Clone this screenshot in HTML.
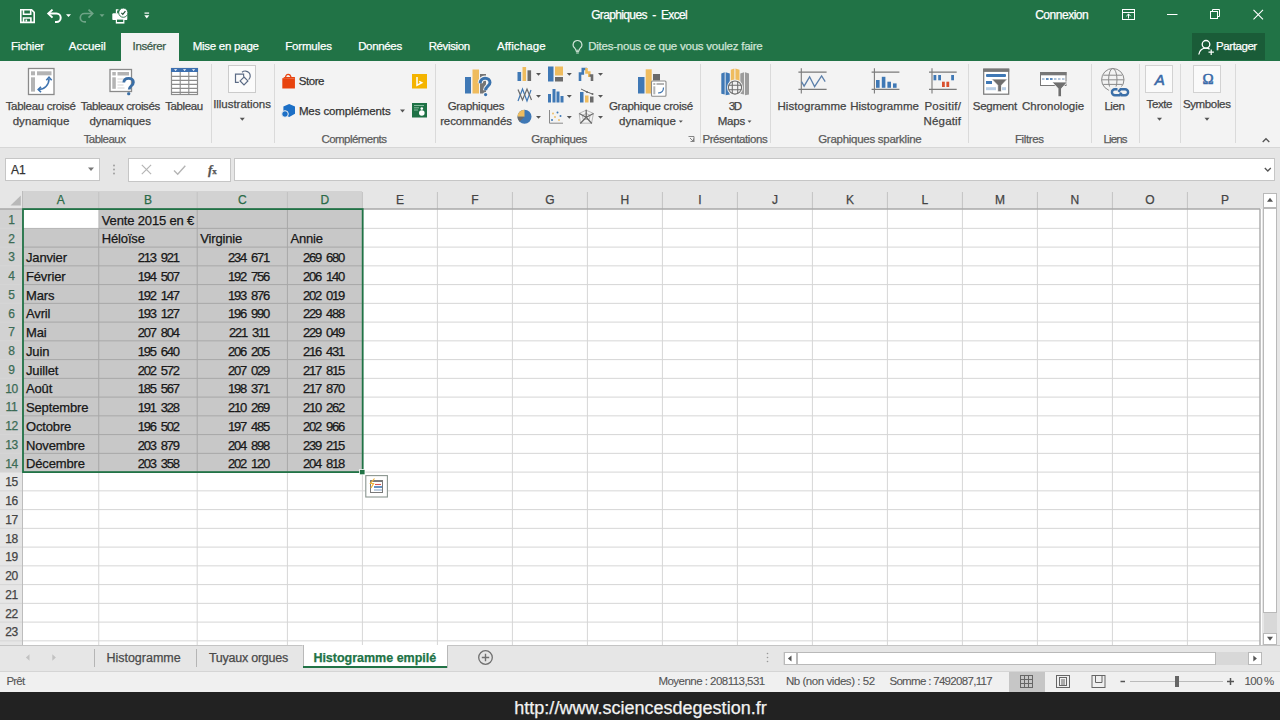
<!DOCTYPE html><html><head><meta charset="utf-8"><style>
html,body{margin:0;padding:0;width:1280px;height:720px;overflow:hidden;background:#fff}
body{position:relative;font-family:'Liberation Sans',sans-serif}
.b{position:absolute}
.t{position:absolute;white-space:nowrap;-webkit-text-stroke:0.25px currentColor}
svg{position:absolute;left:0;top:0}
</style></head><body><div class="b" style="left:0px;top:0px;width:1280px;height:61px;background:#217346"></div><div class="b" style="left:121px;top:33px;width:58px;height:28px;background:#f3f3f3"></div><div class="b" style="left:0px;top:61px;width:1280px;height:86px;background:#f3f3f3"></div><div class="b" style="left:0px;top:146.5px;width:1280px;height:1.5px;background:#d6d6d6"></div><div class="b" style="left:0px;top:148px;width:1280px;height:43px;background:#e6e6e6"></div><div class="t" style="left:591.15px;top:9.04px;font-size:12px;line-height:12px;color:#fff;font-weight:400;letter-spacing:-0.640px;">Graphiques &nbsp;-&nbsp; Excel</div><div class="t" style="left:1035.2px;top:9.14px;font-size:12px;line-height:12px;color:#fff;font-weight:400;letter-spacing:-0.484px;">Connexion</div><div class="t" style="left:10.9px;top:41.17px;font-size:11.5px;line-height:11.5px;color:#fff;font-weight:400;letter-spacing:-0.203px;">Fichier</div><div class="t" style="left:68.80000000000001px;top:41.17px;font-size:11.5px;line-height:11.5px;color:#fff;font-weight:400;letter-spacing:-0.013px;">Accueil</div><div class="t" style="left:132.6px;top:41.17px;font-size:11.5px;line-height:11.5px;color:#3a5a48;font-weight:400;letter-spacing:-0.366px;">Insérer</div><div class="t" style="left:192.65px;top:41.17px;font-size:11.5px;line-height:11.5px;color:#fff;font-weight:400;letter-spacing:-0.250px;">Mise en page</div><div class="t" style="left:285.15px;top:41.17px;font-size:11.5px;line-height:11.5px;color:#fff;font-weight:400;letter-spacing:-0.163px;">Formules</div><div class="t" style="left:358.15px;top:41.17px;font-size:11.5px;line-height:11.5px;color:#fff;font-weight:400;letter-spacing:-0.333px;">Données</div><div class="t" style="left:428.65px;top:41.17px;font-size:11.5px;line-height:11.5px;color:#fff;font-weight:400;letter-spacing:-0.366px;">Révision</div><div class="t" style="left:496.9px;top:41.17px;font-size:11.5px;line-height:11.5px;color:#fff;font-weight:400;letter-spacing:0.131px;">Affichage</div><div class="t" style="left:588.15px;top:40.97px;font-size:11.5px;line-height:11.5px;color:#cfe3d6;font-weight:400;letter-spacing:-0.225px;">Dites-nous ce que vous voulez faire</div><div class="b" style="left:1192px;top:33px;width:73px;height:27px;background:#1a5c38"></div><div class="t" style="left:1216.0px;top:40.97px;font-size:11.5px;line-height:11.5px;color:#fff;font-weight:400;letter-spacing:-0.416px;">Partager</div><div class="b" style="left:210.5px;top:64px;width:1px;height:79px;background:#dadada"></div><div class="b" style="left:274px;top:64px;width:1px;height:79px;background:#dadada"></div><div class="b" style="left:434.5px;top:64px;width:1px;height:79px;background:#dadada"></div><div class="b" style="left:699.5px;top:64px;width:1px;height:79px;background:#dadada"></div><div class="b" style="left:770px;top:64px;width:1px;height:79px;background:#dadada"></div><div class="b" style="left:967.5px;top:64px;width:1px;height:79px;background:#dadada"></div><div class="b" style="left:1091px;top:64px;width:1px;height:79px;background:#dadada"></div><div class="b" style="left:1138.5px;top:64px;width:1px;height:79px;background:#dadada"></div><div class="b" style="left:1180px;top:64px;width:1px;height:79px;background:#dadada"></div><div class="b" style="left:1234.5px;top:64px;width:1px;height:79px;background:#dadada"></div><div class="t" style="left:5.65px;top:100.87px;font-size:11.5px;line-height:11.5px;color:#444;font-weight:400;letter-spacing:-0.297px;">Tableau croisé</div><div class="t" style="left:12.65px;top:115.57px;font-size:11.5px;line-height:11.5px;color:#444;font-weight:400;letter-spacing:0.067px;">dynamique</div><div class="t" style="left:80.65px;top:100.87px;font-size:11.5px;line-height:11.5px;color:#444;font-weight:400;letter-spacing:-0.407px;">Tableaux croisés</div><div class="t" style="left:89.4px;top:115.57px;font-size:11.5px;line-height:11.5px;color:#444;font-weight:400;letter-spacing:-0.052px;">dynamiques</div><div class="t" style="left:165.15px;top:100.87px;font-size:11.5px;line-height:11.5px;color:#444;font-weight:400;letter-spacing:-0.374px;">Tableau</div><div class="t" style="left:83.65px;top:133.57px;font-size:11.5px;line-height:11.5px;color:#5c5c5c;font-weight:400;letter-spacing:-0.535px;">Tableaux</div><div class="b" style="left:228px;top:64.7px;width:27.6px;height:28px;background:#fbfbfb;border:1px solid #cbcbcb;box-sizing:border-box"></div><div class="t" style="left:213.15px;top:99.17px;font-size:11.5px;line-height:11.5px;color:#444;font-weight:400;letter-spacing:-0.031px;">Illustrations</div><div class="t" style="left:298.7px;top:76.07px;font-size:11.5px;line-height:11.5px;color:#333;font-weight:400;letter-spacing:-0.425px;">Store</div><div class="t" style="left:298.9px;top:105.77px;font-size:11.5px;line-height:11.5px;color:#333;font-weight:400;letter-spacing:-0.108px;">Mes compléments</div><div class="t" style="left:321.4px;top:133.57px;font-size:11.5px;line-height:11.5px;color:#5c5c5c;font-weight:400;letter-spacing:-0.540px;">Compléments</div><div class="t" style="left:447.65px;top:100.87px;font-size:11.5px;line-height:11.5px;color:#444;font-weight:400;letter-spacing:-0.297px;">Graphiques</div><div class="t" style="left:440.15px;top:115.57px;font-size:11.5px;line-height:11.5px;color:#444;font-weight:400;letter-spacing:-0.107px;">recommandés</div><div class="t" style="left:608.9px;top:100.87px;font-size:11.5px;line-height:11.5px;color:#444;font-weight:400;letter-spacing:-0.219px;">Graphique croisé</div><div class="t" style="left:618.9px;top:115.57px;font-size:11.5px;line-height:11.5px;color:#444;font-weight:400;letter-spacing:0.098px;">dynamique</div><div class="t" style="left:531.15px;top:133.57px;font-size:11.5px;line-height:11.5px;color:#5c5c5c;font-weight:400;letter-spacing:-0.380px;">Graphiques</div><div class="t" style="left:728.65px;top:100.87px;font-size:11.5px;line-height:11.5px;color:#444;font-weight:400;letter-spacing:-1.403px;">3D</div><div class="t" style="left:717.65px;top:115.57px;font-size:11.5px;line-height:11.5px;color:#444;font-weight:400;letter-spacing:-0.192px;">Maps</div><div class="t" style="left:702.4px;top:133.57px;font-size:11.5px;line-height:11.5px;color:#5c5c5c;font-weight:400;letter-spacing:-0.419px;">Présentations</div><div class="t" style="left:777.4px;top:100.87px;font-size:11.5px;line-height:11.5px;color:#444;font-weight:400;letter-spacing:0.066px;">Histogramme</div><div class="t" style="left:850.15px;top:100.87px;font-size:11.5px;line-height:11.5px;color:#444;font-weight:400;letter-spacing:0.041px;">Histogramme</div><div class="t" style="left:924.4px;top:100.87px;font-size:11.5px;line-height:11.5px;color:#444;font-weight:400;letter-spacing:0.298px;">Positif/</div><div class="t" style="left:923.6px;top:115.57px;font-size:11.5px;line-height:11.5px;color:#444;font-weight:400;letter-spacing:0.160px;">Négatif</div><div class="t" style="left:818.15px;top:133.57px;font-size:11.5px;line-height:11.5px;color:#5c5c5c;font-weight:400;letter-spacing:-0.270px;">Graphiques sparkline</div><div class="t" style="left:972.8px;top:100.87px;font-size:11.5px;line-height:11.5px;color:#444;font-weight:400;letter-spacing:-0.272px;">Segment</div><div class="t" style="left:1022.0px;top:100.87px;font-size:11.5px;line-height:11.5px;color:#444;font-weight:400;letter-spacing:0.018px;">Chronologie</div><div class="t" style="left:1015.0px;top:133.57px;font-size:11.5px;line-height:11.5px;color:#5c5c5c;font-weight:400;letter-spacing:-0.402px;">Filtres</div><div class="t" style="left:1104.4px;top:100.87px;font-size:11.5px;line-height:11.5px;color:#444;font-weight:400;letter-spacing:-0.417px;">Lien</div><div class="t" style="left:1103.6000000000001px;top:133.57px;font-size:11.5px;line-height:11.5px;color:#5c5c5c;font-weight:400;letter-spacing:-0.925px;">Liens</div><div class="b" style="left:1145.3px;top:65px;width:27.3px;height:27.5px;background:#fafafa;border:1px solid #d2d2d2;box-sizing:border-box"></div><div class="t" style="left:1009.7px;width:300px;text-align:center;top:71.60px;font-size:15px;line-height:15px;color:#3a6aa8;font-weight:400;font-style:italic;-webkit-text-stroke:0.6px #3a6aa8">A</div><div class="t" style="left:1146.6000000000001px;top:99.07px;font-size:11.5px;line-height:11.5px;color:#444;font-weight:400;letter-spacing:-0.425px;">Texte</div><div class="b" style="left:1193px;top:65px;width:27.7px;height:27.5px;background:#fafafa;border:1px solid #d2d2d2;box-sizing:border-box"></div><div class="t" style="left:1058px;width:300px;text-align:center;top:71.60px;font-size:15px;line-height:15px;color:#3a6aa8;font-weight:400;font-family:'Liberation Serif',serif;-webkit-text-stroke:0.5px #3a6aa8">Ω</div><div class="t" style="left:1182.9px;top:99.07px;font-size:11.5px;line-height:11.5px;color:#444;font-weight:400;letter-spacing:-0.357px;">Symboles</div><div class="b" style="left:5px;top:158px;width:95px;height:23px;background:#fff;border:1px solid #c6c6c6;box-sizing:border-box"></div><div class="t" style="left:11px;top:164.34px;font-size:12px;line-height:12px;color:#333;font-weight:400;">A1</div><div class="b" style="left:128px;top:157.5px;width:103px;height:24px;background:#fff;border:1px solid #c6c6c6;box-sizing:border-box"></div><div class="t" style="left:208px;top:162.50px;font-size:13px;line-height:13px;color:#555;font-weight:400;font-family:'Liberation Serif',serif;font-weight:700"><i>f</i><span style="font-size:9px">x</span></div><div class="b" style="left:234.4px;top:158px;width:1041px;height:23.4px;background:#fff;border:1px solid #c6c6c6;box-sizing:border-box"></div><div class="b" style="left:0px;top:191px;width:1262px;height:18px;background:#e6e6e6"></div><div class="b" style="left:23px;top:209px;width:1237px;height:436px;background:#fff"></div><div class="b" style="left:0px;top:209px;width:23px;height:436px;background:#e6e6e6"></div><div class="b" style="left:23px;top:191px;width:339.4px;height:18px;background:#d2d2d2"></div><div class="b" style="left:0px;top:209px;width:23px;height:263.1px;background:#d2d2d2"></div><div class="t" style="left:-89.125px;width:300px;text-align:center;top:194.14px;font-size:12px;line-height:12px;color:#2a6a47;font-weight:400;">A</div><div class="t" style="left:-2.0250000000000057px;width:300px;text-align:center;top:194.14px;font-size:12px;line-height:12px;color:#2a6a47;font-weight:400;">B</div><div class="t" style="left:92.29999999999998px;width:300px;text-align:center;top:194.14px;font-size:12px;line-height:12px;color:#2a6a47;font-weight:400;">C</div><div class="t" style="left:174.89999999999998px;width:300px;text-align:center;top:194.14px;font-size:12px;line-height:12px;color:#2a6a47;font-weight:400;">D</div><div class="t" style="left:249.89999999999998px;width:300px;text-align:center;top:194.14px;font-size:12px;line-height:12px;color:#444;font-weight:400;">E</div><div class="t" style="left:324.9px;width:300px;text-align:center;top:194.14px;font-size:12px;line-height:12px;color:#444;font-weight:400;">F</div><div class="t" style="left:399.9px;width:300px;text-align:center;top:194.14px;font-size:12px;line-height:12px;color:#444;font-weight:400;">G</div><div class="t" style="left:474.9px;width:300px;text-align:center;top:194.14px;font-size:12px;line-height:12px;color:#444;font-weight:400;">H</div><div class="t" style="left:549.9px;width:300px;text-align:center;top:194.14px;font-size:12px;line-height:12px;color:#444;font-weight:400;">I</div><div class="t" style="left:624.9px;width:300px;text-align:center;top:194.14px;font-size:12px;line-height:12px;color:#444;font-weight:400;">J</div><div class="t" style="left:699.9px;width:300px;text-align:center;top:194.14px;font-size:12px;line-height:12px;color:#444;font-weight:400;">K</div><div class="t" style="left:774.9px;width:300px;text-align:center;top:194.14px;font-size:12px;line-height:12px;color:#444;font-weight:400;">L</div><div class="t" style="left:849.9000000000001px;width:300px;text-align:center;top:194.14px;font-size:12px;line-height:12px;color:#444;font-weight:400;">M</div><div class="t" style="left:924.9000000000001px;width:300px;text-align:center;top:194.14px;font-size:12px;line-height:12px;color:#444;font-weight:400;">N</div><div class="t" style="left:999.9000000000001px;width:300px;text-align:center;top:194.14px;font-size:12px;line-height:12px;color:#444;font-weight:400;">O</div><div class="t" style="left:1074.9px;width:300px;text-align:center;top:194.14px;font-size:12px;line-height:12px;color:#444;font-weight:400;">P</div><div class="t" style="left:-138.5px;width:300px;text-align:center;top:213.94px;font-size:12px;line-height:12px;color:#3b6b55;font-weight:400;letter-spacing:-0.3px">1</div><div class="t" style="left:-138.5px;width:300px;text-align:center;top:232.69px;font-size:12px;line-height:12px;color:#3b6b55;font-weight:400;letter-spacing:-0.3px">2</div><div class="t" style="left:-138.5px;width:300px;text-align:center;top:251.44px;font-size:12px;line-height:12px;color:#3b6b55;font-weight:400;letter-spacing:-0.3px">3</div><div class="t" style="left:-138.5px;width:300px;text-align:center;top:270.19px;font-size:12px;line-height:12px;color:#3b6b55;font-weight:400;letter-spacing:-0.3px">4</div><div class="t" style="left:-138.5px;width:300px;text-align:center;top:288.94px;font-size:12px;line-height:12px;color:#3b6b55;font-weight:400;letter-spacing:-0.3px">5</div><div class="t" style="left:-138.5px;width:300px;text-align:center;top:307.69px;font-size:12px;line-height:12px;color:#3b6b55;font-weight:400;letter-spacing:-0.3px">6</div><div class="t" style="left:-138.5px;width:300px;text-align:center;top:326.44px;font-size:12px;line-height:12px;color:#3b6b55;font-weight:400;letter-spacing:-0.3px">7</div><div class="t" style="left:-138.5px;width:300px;text-align:center;top:345.19px;font-size:12px;line-height:12px;color:#3b6b55;font-weight:400;letter-spacing:-0.3px">8</div><div class="t" style="left:-138.5px;width:300px;text-align:center;top:363.94px;font-size:12px;line-height:12px;color:#3b6b55;font-weight:400;letter-spacing:-0.3px">9</div><div class="t" style="left:-138.5px;width:300px;text-align:center;top:382.69px;font-size:12px;line-height:12px;color:#3b6b55;font-weight:400;letter-spacing:-0.3px">10</div><div class="t" style="left:-138.5px;width:300px;text-align:center;top:401.44px;font-size:12px;line-height:12px;color:#3b6b55;font-weight:400;letter-spacing:-0.3px">11</div><div class="t" style="left:-138.5px;width:300px;text-align:center;top:420.19px;font-size:12px;line-height:12px;color:#3b6b55;font-weight:400;letter-spacing:-0.3px">12</div><div class="t" style="left:-138.5px;width:300px;text-align:center;top:438.94px;font-size:12px;line-height:12px;color:#3b6b55;font-weight:400;letter-spacing:-0.3px">13</div><div class="t" style="left:-138.5px;width:300px;text-align:center;top:457.69px;font-size:12px;line-height:12px;color:#3b6b55;font-weight:400;letter-spacing:-0.3px">14</div><div class="t" style="left:-138.5px;width:300px;text-align:center;top:476.44px;font-size:12px;line-height:12px;color:#444;font-weight:400;letter-spacing:-0.3px">15</div><div class="t" style="left:-138.5px;width:300px;text-align:center;top:495.19px;font-size:12px;line-height:12px;color:#444;font-weight:400;letter-spacing:-0.3px">16</div><div class="t" style="left:-138.5px;width:300px;text-align:center;top:513.94px;font-size:12px;line-height:12px;color:#444;font-weight:400;letter-spacing:-0.3px">17</div><div class="t" style="left:-138.5px;width:300px;text-align:center;top:532.69px;font-size:12px;line-height:12px;color:#444;font-weight:400;letter-spacing:-0.3px">18</div><div class="t" style="left:-138.5px;width:300px;text-align:center;top:551.44px;font-size:12px;line-height:12px;color:#444;font-weight:400;letter-spacing:-0.3px">19</div><div class="t" style="left:-138.5px;width:300px;text-align:center;top:570.19px;font-size:12px;line-height:12px;color:#444;font-weight:400;letter-spacing:-0.3px">20</div><div class="t" style="left:-138.5px;width:300px;text-align:center;top:588.94px;font-size:12px;line-height:12px;color:#444;font-weight:400;letter-spacing:-0.3px">21</div><div class="t" style="left:-138.5px;width:300px;text-align:center;top:607.69px;font-size:12px;line-height:12px;color:#444;font-weight:400;letter-spacing:-0.3px">22</div><div class="t" style="left:-138.5px;width:300px;text-align:center;top:626.44px;font-size:12px;line-height:12px;color:#444;font-weight:400;letter-spacing:-0.3px">23</div><div class="t" style="left:101.75px;top:213.50px;font-size:13px;line-height:13px;color:#222;font-weight:400;letter-spacing:-0.15px">Vente 2015 en €</div><div class="t" style="left:101.75px;top:232.25px;font-size:13px;line-height:13px;color:#222;font-weight:400;letter-spacing:-0.15px">Héloïse</div><div class="t" style="left:200.2px;top:232.25px;font-size:13px;line-height:13px;color:#222;font-weight:400;letter-spacing:-0.15px">Virginie</div><div class="t" style="left:290.4px;top:232.25px;font-size:13px;line-height:13px;color:#222;font-weight:400;letter-spacing:-0.15px">Annie</div><div class="t" style="left:26px;top:251.00px;font-size:13px;line-height:13px;color:#222;font-weight:400;letter-spacing:-0.15px">Janvier</div><div class="t" style="left:-121.10000000000002px;width:300px;text-align:right;top:251.00px;font-size:13px;line-height:13px;color:#222;font-weight:400;letter-spacing:-1.2px;word-spacing:2.5px">213 921</div><div class="t" style="left:-30.900000000000034px;width:300px;text-align:right;top:251.00px;font-size:13px;line-height:13px;color:#222;font-weight:400;letter-spacing:-1.2px;word-spacing:2.5px">234 671</div><div class="t" style="left:44.099999999999966px;width:300px;text-align:right;top:251.00px;font-size:13px;line-height:13px;color:#222;font-weight:400;letter-spacing:-1.2px;word-spacing:2.5px">269 680</div><div class="t" style="left:26px;top:269.75px;font-size:13px;line-height:13px;color:#222;font-weight:400;letter-spacing:-0.15px">Février</div><div class="t" style="left:-121.10000000000002px;width:300px;text-align:right;top:269.75px;font-size:13px;line-height:13px;color:#222;font-weight:400;letter-spacing:-1.2px;word-spacing:2.5px">194 507</div><div class="t" style="left:-30.900000000000034px;width:300px;text-align:right;top:269.75px;font-size:13px;line-height:13px;color:#222;font-weight:400;letter-spacing:-1.2px;word-spacing:2.5px">192 756</div><div class="t" style="left:44.099999999999966px;width:300px;text-align:right;top:269.75px;font-size:13px;line-height:13px;color:#222;font-weight:400;letter-spacing:-1.2px;word-spacing:2.5px">206 140</div><div class="t" style="left:26px;top:288.50px;font-size:13px;line-height:13px;color:#222;font-weight:400;letter-spacing:-0.15px">Mars</div><div class="t" style="left:-121.10000000000002px;width:300px;text-align:right;top:288.50px;font-size:13px;line-height:13px;color:#222;font-weight:400;letter-spacing:-1.2px;word-spacing:2.5px">192 147</div><div class="t" style="left:-30.900000000000034px;width:300px;text-align:right;top:288.50px;font-size:13px;line-height:13px;color:#222;font-weight:400;letter-spacing:-1.2px;word-spacing:2.5px">193 876</div><div class="t" style="left:44.099999999999966px;width:300px;text-align:right;top:288.50px;font-size:13px;line-height:13px;color:#222;font-weight:400;letter-spacing:-1.2px;word-spacing:2.5px">202 019</div><div class="t" style="left:26px;top:307.25px;font-size:13px;line-height:13px;color:#222;font-weight:400;letter-spacing:-0.15px">Avril</div><div class="t" style="left:-121.10000000000002px;width:300px;text-align:right;top:307.25px;font-size:13px;line-height:13px;color:#222;font-weight:400;letter-spacing:-1.2px;word-spacing:2.5px">193 127</div><div class="t" style="left:-30.900000000000034px;width:300px;text-align:right;top:307.25px;font-size:13px;line-height:13px;color:#222;font-weight:400;letter-spacing:-1.2px;word-spacing:2.5px">196 990</div><div class="t" style="left:44.099999999999966px;width:300px;text-align:right;top:307.25px;font-size:13px;line-height:13px;color:#222;font-weight:400;letter-spacing:-1.2px;word-spacing:2.5px">229 488</div><div class="t" style="left:26px;top:326.00px;font-size:13px;line-height:13px;color:#222;font-weight:400;letter-spacing:-0.15px">Mai</div><div class="t" style="left:-121.10000000000002px;width:300px;text-align:right;top:326.00px;font-size:13px;line-height:13px;color:#222;font-weight:400;letter-spacing:-1.2px;word-spacing:2.5px">207 804</div><div class="t" style="left:-30.900000000000034px;width:300px;text-align:right;top:326.00px;font-size:13px;line-height:13px;color:#222;font-weight:400;letter-spacing:-1.2px;word-spacing:2.5px">221 311</div><div class="t" style="left:44.099999999999966px;width:300px;text-align:right;top:326.00px;font-size:13px;line-height:13px;color:#222;font-weight:400;letter-spacing:-1.2px;word-spacing:2.5px">229 049</div><div class="t" style="left:26px;top:344.75px;font-size:13px;line-height:13px;color:#222;font-weight:400;letter-spacing:-0.15px">Juin</div><div class="t" style="left:-121.10000000000002px;width:300px;text-align:right;top:344.75px;font-size:13px;line-height:13px;color:#222;font-weight:400;letter-spacing:-1.2px;word-spacing:2.5px">195 640</div><div class="t" style="left:-30.900000000000034px;width:300px;text-align:right;top:344.75px;font-size:13px;line-height:13px;color:#222;font-weight:400;letter-spacing:-1.2px;word-spacing:2.5px">206 205</div><div class="t" style="left:44.099999999999966px;width:300px;text-align:right;top:344.75px;font-size:13px;line-height:13px;color:#222;font-weight:400;letter-spacing:-1.2px;word-spacing:2.5px">216 431</div><div class="t" style="left:26px;top:363.50px;font-size:13px;line-height:13px;color:#222;font-weight:400;letter-spacing:-0.15px">Juillet</div><div class="t" style="left:-121.10000000000002px;width:300px;text-align:right;top:363.50px;font-size:13px;line-height:13px;color:#222;font-weight:400;letter-spacing:-1.2px;word-spacing:2.5px">202 572</div><div class="t" style="left:-30.900000000000034px;width:300px;text-align:right;top:363.50px;font-size:13px;line-height:13px;color:#222;font-weight:400;letter-spacing:-1.2px;word-spacing:2.5px">207 029</div><div class="t" style="left:44.099999999999966px;width:300px;text-align:right;top:363.50px;font-size:13px;line-height:13px;color:#222;font-weight:400;letter-spacing:-1.2px;word-spacing:2.5px">217 815</div><div class="t" style="left:26px;top:382.25px;font-size:13px;line-height:13px;color:#222;font-weight:400;letter-spacing:-0.15px">Août</div><div class="t" style="left:-121.10000000000002px;width:300px;text-align:right;top:382.25px;font-size:13px;line-height:13px;color:#222;font-weight:400;letter-spacing:-1.2px;word-spacing:2.5px">185 567</div><div class="t" style="left:-30.900000000000034px;width:300px;text-align:right;top:382.25px;font-size:13px;line-height:13px;color:#222;font-weight:400;letter-spacing:-1.2px;word-spacing:2.5px">198 371</div><div class="t" style="left:44.099999999999966px;width:300px;text-align:right;top:382.25px;font-size:13px;line-height:13px;color:#222;font-weight:400;letter-spacing:-1.2px;word-spacing:2.5px">217 870</div><div class="t" style="left:26px;top:401.00px;font-size:13px;line-height:13px;color:#222;font-weight:400;letter-spacing:-0.15px">Septembre</div><div class="t" style="left:-121.10000000000002px;width:300px;text-align:right;top:401.00px;font-size:13px;line-height:13px;color:#222;font-weight:400;letter-spacing:-1.2px;word-spacing:2.5px">191 328</div><div class="t" style="left:-30.900000000000034px;width:300px;text-align:right;top:401.00px;font-size:13px;line-height:13px;color:#222;font-weight:400;letter-spacing:-1.2px;word-spacing:2.5px">210 269</div><div class="t" style="left:44.099999999999966px;width:300px;text-align:right;top:401.00px;font-size:13px;line-height:13px;color:#222;font-weight:400;letter-spacing:-1.2px;word-spacing:2.5px">210 262</div><div class="t" style="left:26px;top:419.75px;font-size:13px;line-height:13px;color:#222;font-weight:400;letter-spacing:-0.15px">Octobre</div><div class="t" style="left:-121.10000000000002px;width:300px;text-align:right;top:419.75px;font-size:13px;line-height:13px;color:#222;font-weight:400;letter-spacing:-1.2px;word-spacing:2.5px">196 502</div><div class="t" style="left:-30.900000000000034px;width:300px;text-align:right;top:419.75px;font-size:13px;line-height:13px;color:#222;font-weight:400;letter-spacing:-1.2px;word-spacing:2.5px">197 485</div><div class="t" style="left:44.099999999999966px;width:300px;text-align:right;top:419.75px;font-size:13px;line-height:13px;color:#222;font-weight:400;letter-spacing:-1.2px;word-spacing:2.5px">202 966</div><div class="t" style="left:26px;top:438.50px;font-size:13px;line-height:13px;color:#222;font-weight:400;letter-spacing:-0.15px">Novembre</div><div class="t" style="left:-121.10000000000002px;width:300px;text-align:right;top:438.50px;font-size:13px;line-height:13px;color:#222;font-weight:400;letter-spacing:-1.2px;word-spacing:2.5px">203 879</div><div class="t" style="left:-30.900000000000034px;width:300px;text-align:right;top:438.50px;font-size:13px;line-height:13px;color:#222;font-weight:400;letter-spacing:-1.2px;word-spacing:2.5px">204 898</div><div class="t" style="left:44.099999999999966px;width:300px;text-align:right;top:438.50px;font-size:13px;line-height:13px;color:#222;font-weight:400;letter-spacing:-1.2px;word-spacing:2.5px">239 215</div><div class="t" style="left:26px;top:457.25px;font-size:13px;line-height:13px;color:#222;font-weight:400;letter-spacing:-0.15px">Décembre</div><div class="t" style="left:-121.10000000000002px;width:300px;text-align:right;top:457.25px;font-size:13px;line-height:13px;color:#222;font-weight:400;letter-spacing:-1.2px;word-spacing:2.5px">203 358</div><div class="t" style="left:-30.900000000000034px;width:300px;text-align:right;top:457.25px;font-size:13px;line-height:13px;color:#222;font-weight:400;letter-spacing:-1.2px;word-spacing:2.5px">202 120</div><div class="t" style="left:44.099999999999966px;width:300px;text-align:right;top:457.25px;font-size:13px;line-height:13px;color:#222;font-weight:400;letter-spacing:-1.2px;word-spacing:2.5px">204 818</div><div class="b" style="left:1262px;top:191px;width:18px;height:454px;background:#e6e6e6"></div><div class="b" style="left:1263.2px;top:193.2px;width:13.5px;height:14.4px;background:#fff;border:1px solid #b9b9b9;box-sizing:border-box"></div><div class="b" style="left:1263.2px;top:207.6px;width:13.5px;height:405px;background:#fff;border:1px solid #b9b9b9;box-sizing:border-box"></div><div class="b" style="left:1263.5px;top:612.5px;width:13px;height:20px;background:#d8d8d8"></div><div class="b" style="left:1263.2px;top:632.5px;width:13.5px;height:12.8px;background:#fff;border:1px solid #b9b9b9;box-sizing:border-box"></div><div class="b" style="left:0px;top:645px;width:1280px;height:26px;background:#e6e6e6"></div><div class="b" style="left:94px;top:649px;width:1px;height:18px;background:#b5b5b5"></div><div class="t" style="left:106.4px;top:651.72px;font-size:12.5px;line-height:12.5px;color:#4a4a4a;font-weight:400;letter-spacing:-0.003px;">Histogramme</div><div class="b" style="left:195.5px;top:649px;width:1px;height:18px;background:#b5b5b5"></div><div class="t" style="left:208.9px;top:651.72px;font-size:12.5px;line-height:12.5px;color:#4a4a4a;font-weight:400;letter-spacing:-0.245px;">Tuyaux orgues</div><div class="b" style="left:303px;top:641px;width:144px;height:25.5px;background:#fff"></div><div class="b" style="left:302.5px;top:645px;width:1px;height:23px;background:#b9b9b9"></div><div class="b" style="left:446.5px;top:645px;width:1px;height:23px;background:#b9b9b9"></div><div class="b" style="left:303px;top:666.3px;width:144px;height:1.8px;background:#217346"></div><div class="t" style="left:313.4px;top:651.72px;font-size:12.5px;line-height:12.5px;color:#217346;font-weight:700;letter-spacing:-0.010px;">Histogramme empilé</div><div class="b" style="left:783px;top:651.6px;width:478px;height:13.8px;background:#d8d8d8"></div><div class="b" style="left:783.5px;top:651.6px;width:13.5px;height:13.8px;background:#fff;border:1px solid #b9b9b9;box-sizing:border-box"></div><div class="b" style="left:797px;top:651.6px;width:418.6px;height:13.8px;background:#fff;border:1px solid #b9b9b9;box-sizing:border-box"></div><div class="b" style="left:1248.4px;top:651.6px;width:13.2px;height:13.8px;background:#fff;border:1px solid #b9b9b9;box-sizing:border-box"></div><div class="b" style="left:0px;top:671px;width:1280px;height:21px;background:#f0f0f0"></div><div class="b" style="left:0px;top:671px;width:1280px;height:1px;background:#d5d5d5"></div><div class="t" style="left:6.4px;top:675.87px;font-size:11.5px;line-height:11.5px;color:#555;font-weight:400;letter-spacing:-0.765px;-webkit-text-stroke:0.1px #555">Prêt</div><div class="t" style="left:658.4px;top:676.17px;font-size:11.5px;line-height:11.5px;color:#555;font-weight:400;letter-spacing:-0.526px;-webkit-text-stroke:0.1px #555">Moyenne : 208113,531</div><div class="t" style="left:785.9px;top:676.17px;font-size:11.5px;line-height:11.5px;color:#555;font-weight:400;letter-spacing:-0.437px;-webkit-text-stroke:0.1px #555">Nb (non vides) : 52</div><div class="t" style="left:889.4px;top:676.17px;font-size:11.5px;line-height:11.5px;color:#555;font-weight:400;letter-spacing:-0.679px;-webkit-text-stroke:0.1px #555">Somme : 7492087,117</div><div class="b" style="left:1009px;top:672px;width:36px;height:20px;background:#c6c6c6"></div><div class="t" style="left:1244.4px;top:676.17px;font-size:11.5px;line-height:11.5px;color:#555;font-weight:400;letter-spacing:-0.444px;-webkit-text-stroke:0.1px #555">100</div><div class="t" style="left:1264.1000000000001px;top:676.17px;font-size:11.5px;line-height:11.5px;color:#555;font-weight:400;letter-spacing:-1.734px;-webkit-text-stroke:0.1px #555">%</div><div class="b" style="left:0px;top:692px;width:1280px;height:28px;background:#222"></div><div class="t" style="left:514.3px;top:698.56px;font-size:18px;line-height:18px;color:#f2f2f2;font-weight:400;letter-spacing:0.009px;">http://www.sciencesdegestion.fr</div><svg width="1280" height="720" viewBox="0 0 1280 720"><line x1="98.75" y1="209" x2="98.75" y2="645" stroke="#d6d6d6" stroke-width="1"/><line x1="98.75" y1="192" x2="98.75" y2="209" stroke="#c2c2c2" stroke-width="1"/><line x1="197.2" y1="209" x2="197.2" y2="645" stroke="#d6d6d6" stroke-width="1"/><line x1="197.2" y1="192" x2="197.2" y2="209" stroke="#c2c2c2" stroke-width="1"/><line x1="287.4" y1="209" x2="287.4" y2="645" stroke="#d6d6d6" stroke-width="1"/><line x1="287.4" y1="192" x2="287.4" y2="209" stroke="#c2c2c2" stroke-width="1"/><line x1="362.4" y1="209" x2="362.4" y2="645" stroke="#d6d6d6" stroke-width="1"/><line x1="362.4" y1="192" x2="362.4" y2="209" stroke="#c2c2c2" stroke-width="1"/><line x1="437.4" y1="209" x2="437.4" y2="645" stroke="#d6d6d6" stroke-width="1"/><line x1="437.4" y1="192" x2="437.4" y2="209" stroke="#c2c2c2" stroke-width="1"/><line x1="512.4" y1="209" x2="512.4" y2="645" stroke="#d6d6d6" stroke-width="1"/><line x1="512.4" y1="192" x2="512.4" y2="209" stroke="#c2c2c2" stroke-width="1"/><line x1="587.4" y1="209" x2="587.4" y2="645" stroke="#d6d6d6" stroke-width="1"/><line x1="587.4" y1="192" x2="587.4" y2="209" stroke="#c2c2c2" stroke-width="1"/><line x1="662.4" y1="209" x2="662.4" y2="645" stroke="#d6d6d6" stroke-width="1"/><line x1="662.4" y1="192" x2="662.4" y2="209" stroke="#c2c2c2" stroke-width="1"/><line x1="737.4" y1="209" x2="737.4" y2="645" stroke="#d6d6d6" stroke-width="1"/><line x1="737.4" y1="192" x2="737.4" y2="209" stroke="#c2c2c2" stroke-width="1"/><line x1="812.4" y1="209" x2="812.4" y2="645" stroke="#d6d6d6" stroke-width="1"/><line x1="812.4" y1="192" x2="812.4" y2="209" stroke="#c2c2c2" stroke-width="1"/><line x1="887.4" y1="209" x2="887.4" y2="645" stroke="#d6d6d6" stroke-width="1"/><line x1="887.4" y1="192" x2="887.4" y2="209" stroke="#c2c2c2" stroke-width="1"/><line x1="962.4" y1="209" x2="962.4" y2="645" stroke="#d6d6d6" stroke-width="1"/><line x1="962.4" y1="192" x2="962.4" y2="209" stroke="#c2c2c2" stroke-width="1"/><line x1="1037.4" y1="209" x2="1037.4" y2="645" stroke="#d6d6d6" stroke-width="1"/><line x1="1037.4" y1="192" x2="1037.4" y2="209" stroke="#c2c2c2" stroke-width="1"/><line x1="1112.4" y1="209" x2="1112.4" y2="645" stroke="#d6d6d6" stroke-width="1"/><line x1="1112.4" y1="192" x2="1112.4" y2="209" stroke="#c2c2c2" stroke-width="1"/><line x1="1187.4" y1="209" x2="1187.4" y2="645" stroke="#d6d6d6" stroke-width="1"/><line x1="1187.4" y1="192" x2="1187.4" y2="209" stroke="#c2c2c2" stroke-width="1"/><line x1="0" y1="228.35" x2="1260" y2="228.35" stroke="#d6d6d6" stroke-width="1"/><line x1="0" y1="247.1" x2="1260" y2="247.1" stroke="#d6d6d6" stroke-width="1"/><line x1="0" y1="265.85" x2="1260" y2="265.85" stroke="#d6d6d6" stroke-width="1"/><line x1="0" y1="284.6" x2="1260" y2="284.6" stroke="#d6d6d6" stroke-width="1"/><line x1="0" y1="303.35" x2="1260" y2="303.35" stroke="#d6d6d6" stroke-width="1"/><line x1="0" y1="322.1" x2="1260" y2="322.1" stroke="#d6d6d6" stroke-width="1"/><line x1="0" y1="340.85" x2="1260" y2="340.85" stroke="#d6d6d6" stroke-width="1"/><line x1="0" y1="359.6" x2="1260" y2="359.6" stroke="#d6d6d6" stroke-width="1"/><line x1="0" y1="378.35" x2="1260" y2="378.35" stroke="#d6d6d6" stroke-width="1"/><line x1="0" y1="397.1" x2="1260" y2="397.1" stroke="#d6d6d6" stroke-width="1"/><line x1="0" y1="415.85" x2="1260" y2="415.85" stroke="#d6d6d6" stroke-width="1"/><line x1="0" y1="434.6" x2="1260" y2="434.6" stroke="#d6d6d6" stroke-width="1"/><line x1="0" y1="453.35" x2="1260" y2="453.35" stroke="#d6d6d6" stroke-width="1"/><line x1="0" y1="472.1" x2="1260" y2="472.1" stroke="#d6d6d6" stroke-width="1"/><line x1="0" y1="490.85" x2="1260" y2="490.85" stroke="#d6d6d6" stroke-width="1"/><line x1="0" y1="509.6" x2="1260" y2="509.6" stroke="#d6d6d6" stroke-width="1"/><line x1="0" y1="528.35" x2="1260" y2="528.35" stroke="#d6d6d6" stroke-width="1"/><line x1="0" y1="547.1" x2="1260" y2="547.1" stroke="#d6d6d6" stroke-width="1"/><line x1="0" y1="565.85" x2="1260" y2="565.85" stroke="#d6d6d6" stroke-width="1"/><line x1="0" y1="584.6" x2="1260" y2="584.6" stroke="#d6d6d6" stroke-width="1"/><line x1="0" y1="603.35" x2="1260" y2="603.35" stroke="#d6d6d6" stroke-width="1"/><line x1="0" y1="622.1" x2="1260" y2="622.1" stroke="#d6d6d6" stroke-width="1"/><line x1="0" y1="640.85" x2="1260" y2="640.85" stroke="#d6d6d6" stroke-width="1"/><path d="M23 209.6H362.7V472.1H23z M23 209.6V228.35H98.75V209.6z" fill="#000" fill-opacity="0.215" fill-rule="evenodd"/><line x1="0" y1="209" x2="1260" y2="209" stroke="#a9a9a9" stroke-width="1.3"/><line x1="22.5" y1="191" x2="22.5" y2="645" stroke="#bdbdbd" stroke-width="1"/><line x1="1260" y1="209" x2="1260" y2="645" stroke="#a9a9a9" stroke-width="1.4"/><path d="M0 645.5H302.5M447 645.5H1280" stroke="#c4c4c4" stroke-width="1"/><path d="M20.8 195.6V205.6H10.5z" fill="#b8b8b8"/><rect x="23" y="209.1" width="339.7" height="263.0" fill="none" stroke="#217346" stroke-width="1.8"/><rect x="359.6" y="469.40000000000003" width="5.4" height="5.4" fill="#217346" stroke="#fff" stroke-width="0.8"/><rect x="365.8" y="475.6" width="21.6" height="21.4" fill="#fff" stroke="#8a9690" stroke-width="1.1"/><rect x="370.5" y="480.5" width="12" height="12" fill="#fff" stroke="#7a7a7a" stroke-width="1"/><rect x="370" y="480" width="13" height="2" fill="#7a7a7a"/><path d="M375 484.5h6" stroke="#d9534f" stroke-width="1.1"/><path d="M374 487h8" stroke="#3f78b5" stroke-width="1.6"/><path d="M374 490h8" stroke="#8fa9c8" stroke-width="1.1"/><path d="M374.5 478.5l-4 5h3l-2.5 4.5" fill="none" stroke="#f0b43c" stroke-width="1.2"/><g fill="none" stroke="#fff" stroke-width="1.6"><path d="M20.8 9.8h10.8l2.6 2.6v10h-13.4z"/><path d="M23.5 10v4.2h7.2V10"/><path d="M23.5 22.4v-4.4h7.4v4.4"/></g><rect x="25.5" y="19.5" width="1.6" height="2.2" fill="#fff"/><path d="M49 13.5h7.5a4.2 4.2 0 0 1 0 8.4H55" fill="none" stroke="#fff" stroke-width="2"/><path d="M52.5 9.6L48.3 13.6L52.5 17.6" fill="none" stroke="#fff" stroke-width="2"/><path d="M66 14.2h5l-2.5 2.8z" fill="#fff"/><g opacity="0.35"><path d="M92 13.5h-7.5a4.2 4.2 0 0 0 0 8.4H86" fill="none" stroke="#fff" stroke-width="1.7"/><path d="M88.5 9.6L92.7 13.6L88.5 17.6" fill="none" stroke="#fff" stroke-width="1.7"/><path d="M99.5 14.2h5l-2.5 2.8z" fill="#fff"/></g><rect x="112.3" y="13.3" width="15" height="6.8" rx="1.2" fill="#fff"/><path d="M118.5 9.8h-2v3.8" fill="none" stroke="#fff" stroke-width="1.3"/><rect x="115.8" y="18.6" width="8.6" height="5" fill="#fff"/><rect x="117" y="19.6" width="6.2" height="2.4" fill="#217346"/><circle cx="123.3" cy="12.7" r="4.6" fill="#fff" stroke="#217346" stroke-width="0.9"/><path d="M121.4 12.8l1.4 1.5l2.6-3.1" fill="none" stroke="#1d4f33" stroke-width="1.2"/><rect x="144.5" y="12.5" width="4.6" height="1.2" fill="#fff"/><path d="M144.3 15.2h5l-2.5 3.2z" fill="#fff"/><rect x="1122.5" y="9.5" width="12" height="10" fill="none" stroke="#fff" stroke-width="1"/><path d="M1122.5 12.5h12" stroke="#fff" stroke-width="1"/><path d="M1128.5 18.5v-4.5M1126.3 16.2l2.2-2.2l2.2 2.2" fill="none" stroke="#fff" stroke-width="1"/><path d="M1167 14.5h10.5" stroke="#fff" stroke-width="1"/><rect x="1210.5" y="11.5" width="7" height="7" fill="none" stroke="#fff" stroke-width="1"/><path d="M1212.5 11.5v-2h7v7h-2" fill="none" stroke="#fff" stroke-width="1"/><path d="M1253.5 9.8l9.5 9.5M1263 9.8l-9.5 9.5" stroke="#fff" stroke-width="1.1"/><path d="M577.5 40.5a4.3 4.3 0 0 0-2.6 7.8c0.6 0.5 0.9 1.2 0.9 1.9h3.4c0-0.7 0.3-1.4 0.9-1.9a4.3 4.3 0 0 0-2.6-7.8z" fill="none" stroke="#d3e6da" stroke-width="1.1"/><path d="M575.8 51.6h3.4M576.2 53h2.6" stroke="#d3e6da" stroke-width="1"/><circle cx="1206" cy="44.3" r="3.8" fill="none" stroke="#fff" stroke-width="1.3"/><path d="M1198.8 54.5c0.8-4.2 3.6-6.3 7.2-6.3c1.4 0 2.6 0.3 3.6 0.9" fill="none" stroke="#fff" stroke-width="1.3"/><path d="M1208.5 52.2h5.4M1211.2 49.5v5.4" stroke="#fff" stroke-width="1.2"/><rect x="28.5" y="68.5" width="25.5" height="26" fill="#fff" stroke="#8a8a8a" stroke-width="1.3"/><rect x="31" y="71.3" width="4" height="4" fill="#b4b4b4"/><rect x="37" y="71.3" width="14.5" height="4" fill="#b4b4b4"/><rect x="31" y="77.3" width="4" height="14.3" fill="#b4b4b4"/><path d="M38.5 89.5c6 0 10.5-4.5 10.5-10.5" fill="none" stroke="#3f74b0" stroke-width="1.6"/><path d="M46.3 80.3l2.7-3l2.7 3M41 86.8l-2.8 2.7l2.8 2.7" fill="none" stroke="#3f74b0" stroke-width="1.6"/><rect x="110" y="69.5" width="21.5" height="22" fill="#fff" stroke="#8a8a8a" stroke-width="1.3"/><rect x="112.3" y="72" width="3.5" height="3.5" fill="#b4b4b4"/><rect x="117.5" y="72" width="11.5" height="3.5" fill="#b4b4b4"/><rect x="112.3" y="77.3" width="3.5" height="11.5" fill="#b4b4b4"/><path d="M117.5 79h7M117.5 82h5M117.5 85h6M117.5 88h7" stroke="#c8c8c8" stroke-width="0.8"/><path d="M123.8 82.6c0-2.6 1.9-4.3 4.8-4.3c2.8 0 4.8 1.6 4.8 4c0 3.4-4.2 3.6-4.2 7.3" fill="none" stroke="#3a6ea5" stroke-width="2.8"/><rect x="127.2" y="92.3" width="3" height="3" rx="1" fill="#3a6ea5"/><rect x="171.5" y="68.5" width="26" height="26" fill="#fff" stroke="#8c8c8c" stroke-width="1.2"/><rect x="171" y="68" width="27" height="4" fill="#3c6fb0"/><path d="M174 69.2l1.6 1.8l1.6-1.8zM183 69.2l1.6 1.8l1.6-1.8zM192 69.2l1.6 1.8l1.6-1.8z" fill="#fff"/><path d="M171.5 76.4h26M171.5 80.4h26M171.5 84.4h26M171.5 88.4h26M171.5 92.4h26M180.2 72v22.5M188.8 72v22.5" stroke="#8c8c8c" stroke-width="1.1"/><path d="M238.8 82.4H235.5V74.2H243.6V76.8" fill="none" stroke="#5b6b85" stroke-width="1.2"/><path d="M242 72.3A4.6 4.6 0 1 1 248.6 79.6" fill="none" stroke="#5b6b85" stroke-width="1.2"/><path d="M244 77l3.9 3.9l-3.9 3.9l-3.9-3.9z" fill="none" stroke="#5b6b85" stroke-width="1.2"/><path d="M239.8 117.8h5l-2.5 3z" fill="#555"/><path d="M282.3 78.5h12.4v10h-12.4z" fill="#e8430e"/><path d="M282 78.8l2.5-1.8h10.4v11.5l-0.8-0.8V78.5z" fill="#e8430e"/><path d="M285.5 78.3c0-3 1.2-4 2.8-4c1.5 0 2.3 1 2.8 3" fill="none" stroke="#e8430e" stroke-width="1.2"/><path d="M289.2 104l5.8 2.6v7.2l-5.8 3.2l-5.8-3.2v-7.2z" fill="#1c6fc6"/><circle cx="285" cy="114" r="3.3" fill="#1c6fc6" stroke="#f3f3f3" stroke-width="1"/><path d="M400 109.6h5l-2.5 3z" fill="#555"/><rect x="412" y="74" width="15" height="14.5" fill="#f4b400"/><path d="M417 77v8.3l4.8-2.6l-2.6-1.4" fill="none" stroke="#fff" stroke-width="1.5"/><rect x="412" y="103" width="15" height="14.5" fill="#1e7145"/><path d="M414 105.5h10M414 107.8h5M414 110h4" stroke="#8fc4a6" stroke-width="0.9"/><circle cx="421.8" cy="113" r="2.8" fill="#fff"/><circle cx="421.8" cy="108.6" r="1.3" fill="#fff"/><rect x="465" y="77" width="6" height="16.5" fill="#3f78b5"/><rect x="472.5" y="69.5" width="6.5" height="24" fill="#efbc5e"/><rect x="480" y="74" width="6" height="19.5" fill="#757575"/><path d="M480.2 83.2c0-3 2.2-5 4.9-5c2.9 0 4.9 1.9 4.9 4.4c0 3.5-4.4 3.8-4.4 7.6" fill="none" stroke="#f3f3f3" stroke-width="5.2"/><circle cx="485.6" cy="94.6" r="2.6" fill="#f3f3f3"/><path d="M480.2 83.2c0-3 2.2-5 4.9-5c2.9 0 4.9 1.9 4.9 4.4c0 3.5-4.4 3.8-4.4 7.6" fill="none" stroke="#3a72ad" stroke-width="3"/><circle cx="485.6" cy="94.6" r="1.6" fill="#3a72ad"/><rect x="517.5" y="72" width="3.6" height="9" fill="#3f78b5"/><rect x="522.5" y="67" width="3.6" height="14" fill="#efbc5e"/><rect x="527.5" y="70.3" width="3.6" height="10.7" fill="#6b6b6b"/><path d="M536 73h5l-2.5 2.8z" fill="#555"/><rect x="548" y="66.5" width="5.5" height="15" fill="#3f78b5"/><rect x="555" y="66.5" width="8" height="9" fill="#efbc5e"/><rect x="555" y="77" width="8" height="4.5" fill="#6b6b6b"/><path d="M566.8 73h5l-2.5 2.8z" fill="#555"/><path d="M580 81v-7.5h2.8V69h4.2" fill="none" stroke="#3f78b5" stroke-width="2.6"/><path d="M586.5 68v4.5h2.8v4.5" fill="none" stroke="#efbc5e" stroke-width="2.6"/><path d="M589.5 75.5h2.5v5.5" fill="none" stroke="#6b6b6b" stroke-width="2.6"/><path d="M598 73h5l-2.5 2.8z" fill="#555"/><path d="M518 101l4.5-12l4.5 12l4-11" fill="none" stroke="#3f78b5" stroke-width="1.2"/><path d="M518 89.5l4.5 10.5l4.5-11l4.5 11" fill="none" stroke="#6b6b6b" stroke-width="1.2"/><path d="M536 95h5l-2.5 2.8z" fill="#555"/><rect x="548" y="94" width="3" height="8.5" fill="#3f78b5"/><rect x="552.5" y="89" width="3" height="13.5" fill="#3f78b5"/><rect x="556.5" y="91.5" width="3" height="11" fill="#3f78b5"/><rect x="560.5" y="96" width="3" height="6.5" fill="#3f78b5"/><path d="M566.8 95h5l-2.5 2.8z" fill="#555"/><rect x="580" y="92" width="3.5" height="10.5" fill="#3f78b5"/><rect x="585" y="95.5" width="3.5" height="7" fill="#efbc5e"/><rect x="590" y="96.5" width="3.5" height="6" fill="#6b6b6b"/><path d="M581 89l6 3l5.5 2" stroke="#6b6b6b" stroke-width="1"/><circle cx="587" cy="92" r="1" fill="#6b6b6b"/><circle cx="592.5" cy="94" r="1" fill="#6b6b6b"/><path d="M598 95h5l-2.5 2.8z" fill="#555"/><circle cx="524.5" cy="116.8" r="7" fill="#3f78b5"/><path d="M524.5 116.8V109.8A7 7 0 0 0 517.5 116.8z" fill="#efbc5e"/><path d="M524.5 116.8H517.5A7 7 0 0 0 519.5 121.8z" fill="#6b6b6b"/><path d="M536 116h5l-2.5 2.8z" fill="#555"/><path d="M549.5 110v13.2h13.5" fill="none" stroke="#8a8a8a" stroke-width="1"/><circle cx="552" cy="120" r="1" fill="#3f78b5"/><circle cx="557.5" cy="112.5" r="1" fill="#3f78b5"/><circle cx="560.5" cy="116" r="1" fill="#3f78b5"/><circle cx="555" cy="117" r="0.9" fill="#efbc5e"/><circle cx="559" cy="120" r="0.9" fill="#efbc5e"/><circle cx="553" cy="113.5" r="0.9" fill="#efbc5e"/><path d="M566.8 116h5l-2.5 2.8z" fill="#555"/><g fill="none" stroke="#a8a8a8" stroke-width="0.8"><path d="M586.2 110.2l7.2 3.2l-1.8 9.8h-11.2l-1.2-9.8z"/><path d="M586.2 113.5l4 1.8l-1 4.2h-6l-0.8-4.2z"/></g><g stroke="#6a6a6a" stroke-width="1.3" fill="none"><path d="M586.2 109.8v7.5M579.3 113.5l6.9 3.8l7.3-3.8M580.3 123.5l5.9-6.2l5.6 6.2"/></g><path d="M598 116h5l-2.5 2.8z" fill="#555"/><rect x="638" y="77" width="6.5" height="16.5" fill="#3f78b5"/><rect x="645.7" y="69.3" width="6" height="24.2" fill="#efbc5e"/><rect x="653" y="74" width="7" height="6.5" fill="#6b6b6b"/><rect x="651.5" y="81" width="14.5" height="15.3" rx="1" fill="#fff" stroke="#8a8a8a" stroke-width="1.1"/><rect x="653.3" y="83" width="2" height="2" fill="#b4b4b4"/><rect x="656.5" y="83" width="7.5" height="2" fill="#b4b4b4"/><rect x="653.3" y="86.3" width="2" height="8" fill="#b4b4b4"/><path d="M658 93c3.5 0 5.5-2 5.5-5.5" fill="none" stroke="#3f74b0" stroke-width="1.2"/><path d="M678.8 120.5h4l-2 2.3z" fill="#555"/><path d="M688.5 136.5h5.5v5.5M688.5 136.5v0M690 138l3.5 3.5M690.5 141.5h3v-3" fill="none" stroke="#777" stroke-width="0.9"/><path d="M721.3 73.5l3.4-1.2v22.2l-3.4-0.8z" fill="#3f78b5"/><path d="M725.6 72.3l4.2 1.2v21l-4.2 0.8z" fill="#3f78b5"/><path d="M730.8 69.8l3.6-1.3v17h-3.6z" fill="#efbc5e"/><path d="M735.4 68.5l4.1 1.3v15.7h-4.1z" fill="#efbc5e"/><path d="M740.3 73.5l3.8-1.2v22.2l-3.8-0.8z" fill="#9c9c9c"/><path d="M745 72.3l4 1.2v21l-4 0.8z" fill="#9c9c9c"/><circle cx="735" cy="87.5" r="8" fill="#f3f3f3"/><g fill="none" stroke="#6e6e6e" stroke-width="1.05"><circle cx="735" cy="87.5" r="6.6"/><path d="M732.3 81.2v12.6M737.7 81.2v12.6M728.6 85.3h12.8M728.6 89.7h12.8"/></g><path d="M747.5 120.5h4l-2 2.3z" fill="#555"/><path d="M801.3 68.3v25.3M798.4 72.1h28.200000000000045M798.4 89.4h28.200000000000045" stroke="#7a7a7a" stroke-width="1.1"/><path d="M801.5 81.7l2.6 4.5l5.5-9.4l5 9.8l7-10.6l3.6 5.7" fill="none" stroke="#5b7faa" stroke-width="1.3"/><path d="M874.4 68.3v25.3M871.6 72.1h27.799999999999955M871.6 89.4h27.799999999999955" stroke="#7a7a7a" stroke-width="1.1"/><rect x="876" y="80" width="3.6" height="7.8" fill="#3f78b5"/><rect x="881.8" y="76.8" width="3.6" height="11" fill="#3f78b5"/><rect x="887.4" y="81.7" width="3.6" height="6.1" fill="#3f78b5"/><rect x="893" y="83.4" width="3.6" height="4.4" fill="#3f78b5"/><path d="M932 68.3v25.3M929 72.1h27.700000000000045M929 89.4h27.700000000000045" stroke="#7a7a7a" stroke-width="1.1"/><rect x="933.5" y="75" width="2.8" height="5.3" fill="#3f78b5"/><rect x="938.2" y="75" width="2.8" height="5.3" fill="#3f78b5"/><rect x="951.2" y="75" width="2.8" height="5.3" fill="#3f78b5"/><rect x="942" y="81.7" width="2.8" height="5.3" fill="#d9502e"/><rect x="946.4" y="81.7" width="2.8" height="5.3" fill="#d9502e"/><rect x="983.7" y="69.2" width="25" height="25" fill="#fff" stroke="#777" stroke-width="1.2"/><rect x="983.2" y="68.6" width="26" height="3.3" fill="#777"/><rect x="986" y="74" width="20" height="3" rx="1" fill="#3f78b5"/><rect x="986" y="81" width="6" height="3" fill="#3f78b5"/><rect x="986" y="87.2" width="10" height="3" fill="#b9cfe6"/><rect x="1002" y="87.2" width="4" height="3" fill="#b9cfe6"/><path d="M991.5 79h16l-6 6.3v6.5h-3.8v-6.5z" fill="#6f6f6f" stroke="#fff" stroke-width="0.8"/><rect x="1040.5" y="72.5" width="25.5" height="13" fill="#fff" stroke="#777" stroke-width="1"/><rect x="1040" y="72" width="26.5" height="3.3" fill="#777"/><path d="M1042 79h2.5M1046 79h2.5M1050 79h2.5M1054 79h2.5M1058 79h2.5M1062 79h2.5" stroke="#9bb3d0" stroke-width="1.6"/><path d="M1046 79h2.5M1050 79h2.5" stroke="#3f78b5" stroke-width="1.6"/><path d="M1052 82h15.5l-6 6.5v8.2h-3.5v-8.2z" fill="#6f6f6f" stroke="#fff" stroke-width="0.8"/><g fill="none" stroke="#8a8a8a" stroke-width="1"><circle cx="1112.8" cy="79.7" r="11.2"/><ellipse cx="1112.8" cy="79.7" rx="4.2" ry="11.2"/><path d="M1101.6 79.8h22.4M1103.2 75.2h19.2M1103.2 84.4h19.2"/></g><path d="M1109 86.5h23v11.5h-23z" fill="#f3f3f3" opacity="0.9"/><g fill="none" stroke="#3b6fa8" stroke-width="2.4"><path d="M1117.5 89.3h-2.6a3 3 0 0 0 0 6h4.5l2.2-2.6"/><path d="M1120.5 95.3h4.6a3 3 0 0 0 0-6h-4.5l-2.2 2.6"/></g><path d="M1157 117.8h5l-2.5 3z" fill="#555"/><path d="M1204.5 117.8h5l-2.5 3z" fill="#555"/><path d="M1262.7 142l3.3-3.3l3.3 3.3" fill="none" stroke="#555" stroke-width="1.3"/><path d="M88 167.5h6l-3 3.5z" fill="#777"/><circle cx="114" cy="165.5" r="0.9" fill="#999"/><circle cx="114" cy="169.5" r="0.9" fill="#999"/><circle cx="114" cy="173.5" r="0.9" fill="#999"/><path d="M141.8 164.8l9.3 9.3M151.1 164.8l-9.3 9.3" stroke="#b5b5b5" stroke-width="1.2"/><path d="M174 170.5l3.7 3.7l7.6-8.5" fill="none" stroke="#b5b5b5" stroke-width="1.4"/><path d="M1264.8 168l3 3l3-3" fill="none" stroke="#555" stroke-width="1.3"/><path d="M1267 201.7l3-3.9l3 3.9z" fill="#555"/><path d="M1267 636.8l3 3.9l3-3.9z" fill="#555"/><path d="M29.5 654.3v6.4l-3.6-3.2z" fill="#c2c2c2"/><path d="M52.3 654.3v6.4l3.6-3.2z" fill="#c2c2c2"/><circle cx="485.5" cy="657.5" r="6.8" fill="none" stroke="#707070" stroke-width="1.3"/><path d="M481.8 657.5h7.4M485.5 653.8v7.4" stroke="#707070" stroke-width="1.4"/><circle cx="767.5" cy="653.5" r="0.8" fill="#999"/><circle cx="767.5" cy="657.5" r="0.8" fill="#999"/><circle cx="767.5" cy="661.5" r="0.8" fill="#999"/><path d="M791.5 655.5l-3.6 3l3.6 3z" fill="#555"/><path d="M1253.3 655.5l3.6 3l-3.6 3z" fill="#555"/><g fill="none" stroke="#666" stroke-width="1"><rect x="1020.5" y="675.5" width="12" height="12"/><path d="M1024.5 675.5v12M1028.5 675.5v12M1020.5 679.5h12M1020.5 683.5h12"/></g><g fill="none" stroke="#666" stroke-width="1"><rect x="1056.5" y="675.5" width="13" height="12"/><rect x="1059.5" y="677.5" width="7" height="8"/><path d="M1061 680h4M1061 682h4M1061 684h4"/></g><g fill="none" stroke="#666" stroke-width="1"><rect x="1092" y="675.5" width="13" height="12"/><path d="M1095.5 675.5v7h6.5v-7"/></g><path d="M1120.5 681.5h4.5" stroke="#555" stroke-width="1.5"/><path d="M1130 681.5h93" stroke="#bbb" stroke-width="1"/><rect x="1175" y="676" width="4" height="11" fill="#666"/><path d="M1227 681.5h7M1230.5 678v7" stroke="#555" stroke-width="1.5"/></svg></body></html>
